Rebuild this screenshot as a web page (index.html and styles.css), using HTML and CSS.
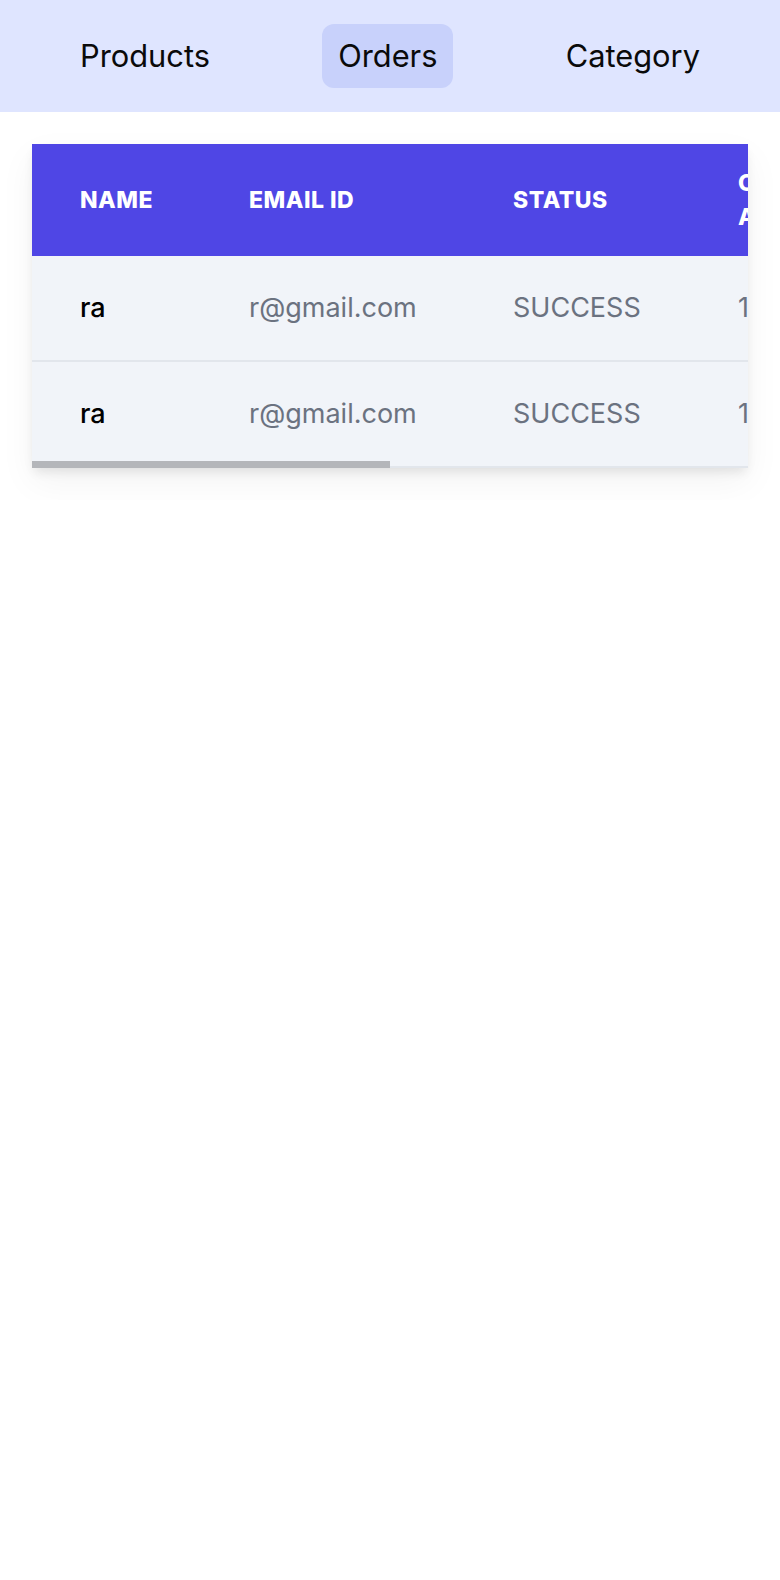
FILE: index.html
```html
<!DOCTYPE html>
<html lang="en">
<head>
<meta charset="utf-8">
<title>Orders</title>
<link rel="stylesheet" href="styles.css">
</head>
<body>
  <nav class="nav">
    <a class="nav-item">Products</a>
    <a class="nav-item active">Orders</a>
    <a class="nav-item">Category</a>
  </nav>
  <main class="content">
    <div class="table-wrap">
      <table class="orders">
        <colgroup>
          <col class="c-name">
          <col class="c-email">
          <col class="c-status">
          <col class="c-amount">
          <col class="c-date">
          <col class="c-pay">
        </colgroup>
        <thead>
          <tr>
            <th>Name</th>
            <th>Email ID</th>
            <th>Status</th>
            <th>Order<br>Amount</th>
            <th>Order Date</th>
            <th>Payment ID</th>
          </tr>
        </thead>
        <tbody>
          <tr>
            <td class="name">ra</td>
            <td>r@gmail.com</td>
            <td>SUCCESS</td>
            <td>1200</td>
            <td>12/03/2024</td>
            <td>pay_1</td>
          </tr>
          <tr>
            <td class="name">ra</td>
            <td>r@gmail.com</td>
            <td>SUCCESS</td>
            <td>1200</td>
            <td>12/03/2024</td>
            <td>pay_2</td>
          </tr>
        </tbody>
      </table>
      <div class="thumb"></div>
    </div>
  </main>
</body>
</html>
```
FILE: styles.css
```css
html, body {
  margin: 0;
  padding: 0;
  background: #ffffff;
  font-family: Inter, "Noto Sans", "Liberation Sans", sans-serif;
  color: #000;
}

.nav {
  display: flex;
  justify-content: space-between;
  align-items: center;
  height: 112px;
  padding: 0 64px;
  box-sizing: border-box;
  background: #dfe5ff;
}

.nav-item {
  display: block;
  height: 64px;
  line-height: 64px;
  padding: 0 16px;
  border-radius: 12px;
  font-size: 30.8px;
  font-weight: 400;
  color: #0a0a0a;
}

.nav-item.active {
  background: #c8d1fb;
}

.content {
  padding: 32px;
}

.table-wrap {
  position: relative;
  overflow: hidden;
  box-shadow: 0 6px 10px -2px rgba(0, 0, 0, 0.09), 0 14px 34px 0 rgba(0, 0, 0, 0.05);
}

.orders {
  width: 1432px;
  table-layout: fixed;
  border-collapse: collapse;
  background: #f1f4f9;
}

.c-name { width: 169px; }
.c-email { width: 264px; }
.c-status { width: 225px; }
.c-amount { width: 250px; }
.c-date { width: 280px; }
.c-pay { width: 244px; }

.orders th {
  background: #4f46e5;
  color: #ffffff;
  text-align: left;
  text-transform: uppercase;
  font-size: 23px;
  font-weight: 800;
  letter-spacing: 0.5px;
  line-height: 34px;
  padding: 22px 48px;
  vertical-align: middle;
  white-space: nowrap;
}

.orders td {
  padding: 32px 48px;
  font-size: 27px;
  line-height: 40px;
  color: #6b7280;
  border-bottom: 2px solid #e2e6ec;
  white-space: nowrap;
}

.orders td.name {
  color: #000;
  font-weight: 500;
}

.thumb {
  position: absolute;
  left: 0;
  bottom: 0;
  width: 358px;
  height: 7px;
  background: #b4b6ba;
}
```
